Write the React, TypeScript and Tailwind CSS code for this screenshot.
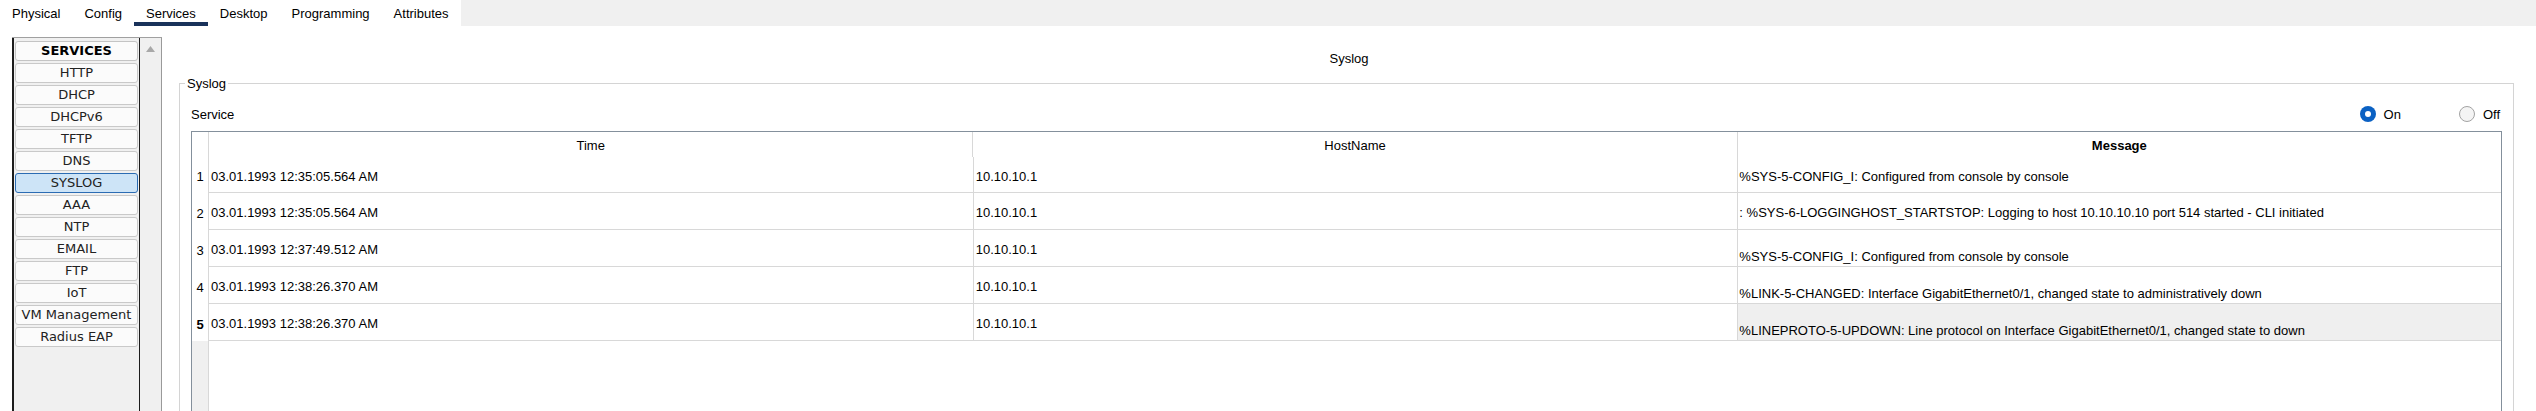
import React from 'react';

const tabs = ['Physical', 'Config', 'Services', 'Desktop', 'Programming', 'Attributes'];

const services = [
    'HTTP',
    'DHCP',
    'DHCPv6',
    'TFTP',
    'DNS',
    'SYSLOG',
    'AAA',
    'NTP',
    'EMAIL',
    'FTP',
    'IoT',
    'VM Management',
    'Radius EAP',
];

type LogRow = {
    n: number;
    time: string;
    host: string;
    msg: string;
    low: boolean;
};

const logs: LogRow[] = [
    { n: 1, time: '03.01.1993 12:35:05.564 AM', host: '10.10.10.1', msg: '%SYS-5-CONFIG_I: Configured from console by console', low: false },
    { n: 2, time: '03.01.1993 12:35:05.564 AM', host: '10.10.10.1', msg: ': %SYS-6-LOGGINGHOST_STARTSTOP: Logging to host 10.10.10.10 port 514 started - CLI initiated', low: false },
    { n: 3, time: '03.01.1993 12:37:49.512 AM', host: '10.10.10.1', msg: '%SYS-5-CONFIG_I: Configured from console by console', low: true },
    { n: 4, time: '03.01.1993 12:38:26.370 AM', host: '10.10.10.1', msg: '%LINK-5-CHANGED: Interface GigabitEthernet0/1, changed state to administratively down', low: true },
    { n: 5, time: '03.01.1993 12:38:26.370 AM', host: '10.10.10.1', msg: '%LINEPROTO-5-UPDOWN: Line protocol on Interface GigabitEthernet0/1, changed state to down', low: true },
];

const SELECTED_ROW = 5;

const ServiceList: React.FC = () => {
    return (
        <div className="ml-[12px] mt-[11px] flex w-[150px] h-[420px] border-t border-[#a0a0a0]">
            <div className="w-[128px] bg-[#f0f0f0] border-l-2 border-r border-[#1c1c1c] pt-[3px] flex flex-col gap-[2px] font-['DejaVu_Sans',sans-serif] text-[13px] leading-[18px] text-[#222]">
                <div className="mx-[1px] h-[20px] rounded-[3px] border border-[#c4c4c4] bg-[#fbfbfb] text-center font-bold text-black">
                    SERVICES
                </div>
                {services.map((s) => (
                    <div
                        key={s}
                        className={
                            s === 'SYSLOG'
                                ? 'mx-[1px] h-[20px] rounded-[3px] border border-[#2b6cb3] bg-[#cde4f7] text-center'
                                : 'mx-[1px] h-[20px] rounded-[3px] border border-[#c9c9c9] bg-[#fbfbfb] text-center'
                        }
                    >
                        {s}
                    </div>
                ))}
            </div>
            <div className="w-[22px] bg-[#f0f0f0] border-r border-[#9a9a9a] flex justify-center pt-[8px]">
                <svg width="9" height="6" viewBox="0 0 9 6">
                    <polygon points="4.5,0 9,6 0,6" fill="#a8a8a8" />
                </svg>
            </div>
        </div>
    );
};

const Radio: React.FC<{ checked: boolean; label: string }> = ({ checked, label }) => (
    <div className="flex items-center gap-[8px]">
        {checked ? (
            <div className="w-[16px] h-[16px] rounded-full bg-[#0b61c3] flex items-center justify-center">
                <div className="w-[6px] h-[6px] rounded-full bg-white" />
            </div>
        ) : (
            <div className="w-[16px] h-[16px] rounded-full border border-[#a3a3a3] bg-[#f4f4f4]" />
        )}
        <span>{label}</span>
    </div>
);

const LogTable: React.FC = () => {
    return (
        <div className="mt-[5px] h-[300px] flex flex-col border-t border-l border-r border-[#84909c]">
            <div className="flex h-[25px]">
                <div className="w-[17px] border-r border-[#d8d8d8]" />
                <div className="flex-1 basis-0 border-r border-[#d8d8d8] flex items-center justify-center pt-[2px]">Time</div>
                <div className="flex-1 basis-0 border-r border-[#d8d8d8] flex items-center justify-center pt-[2px]">HostName</div>
                <div className="flex-1 basis-0 flex items-center justify-center pt-[2px] font-bold">Message</div>
            </div>
            {logs.map((r) => (
                <div key={r.n} className={r.n === 1 ? 'flex h-[36px]' : 'flex h-[37px]'}>
                    <div className={r.n === SELECTED_ROW ? 'w-[17px] border-r border-[#d8d8d8] flex items-center justify-center pt-[3px] font-bold' : 'w-[17px] border-r border-[#d8d8d8] flex items-center justify-center pt-[3px]'}>
                        {r.n}
                    </div>
                    <div className="flex-1 basis-0 border-r border-b border-[#d8d8d8] flex items-center pt-[3px] pl-[2px] whitespace-nowrap">{r.time}</div>
                    <div className="flex-1 basis-0 border-r border-b border-[#d8d8d8] flex items-center pt-[3px] pl-[2px] whitespace-nowrap">{r.host}</div>
                    <div
                        className={
                            (r.low ? 'items-end pb-[2px] ' : 'items-center pt-[3px] ') +
                            (r.n === SELECTED_ROW ? 'bg-[#efefef] ' : '') +
                            'flex-1 basis-0 border-b border-[#d8d8d8] flex pl-[1px] whitespace-nowrap overflow-hidden'
                        }
                    >
                        {r.msg}
                    </div>
                </div>
            ))}
            <div className="flex flex-1">
                <div className="w-[17px] bg-[#f0f0f0] border-r border-[#d8d8d8]" />
                <div className="flex-1" />
            </div>
        </div>
    );
};

const App: React.FC = () => {
    return (
        <div className="w-[2536px] h-[411px] overflow-hidden bg-white text-black font-['Liberation_Sans',Arial,sans-serif] text-[13px] leading-[15px]">
            <div className="flex h-[26px]">
                {tabs.map((t) => (
                    <div
                        key={t}
                        className={
                            t === 'Services'
                                ? 'h-[26px] px-3 pt-[6px] border-b-4 border-[#19325a]'
                                : 'h-[26px] px-3 pt-[6px]'
                        }
                    >
                        {t}
                    </div>
                ))}
                <div className="flex-1 bg-[#f0f0f0]" />
            </div>
            <div className="flex">
                <ServiceList />
                <div className="flex-1 flex flex-col">
                    <div className="pt-[25px] text-center">Syslog</div>
                    <fieldset className="mt-[10px] ml-[17px] mr-[22px] h-[340px] border border-[#d4d4d4] px-[11px] pt-[11px]">
                        <legend className="-ml-[6px] px-[2px] leading-[15px]">Syslog</legend>
                        <div className="flex h-[24px] items-center justify-between pr-[2px]">
                            <span>Service</span>
                            <div className="flex items-center gap-[58px]">
                                <Radio checked label="On" />
                                <Radio checked={false} label="Off" />
                            </div>
                        </div>
                        <LogTable />
                    </fieldset>
                </div>
            </div>
        </div>
    );
};

export default App;
